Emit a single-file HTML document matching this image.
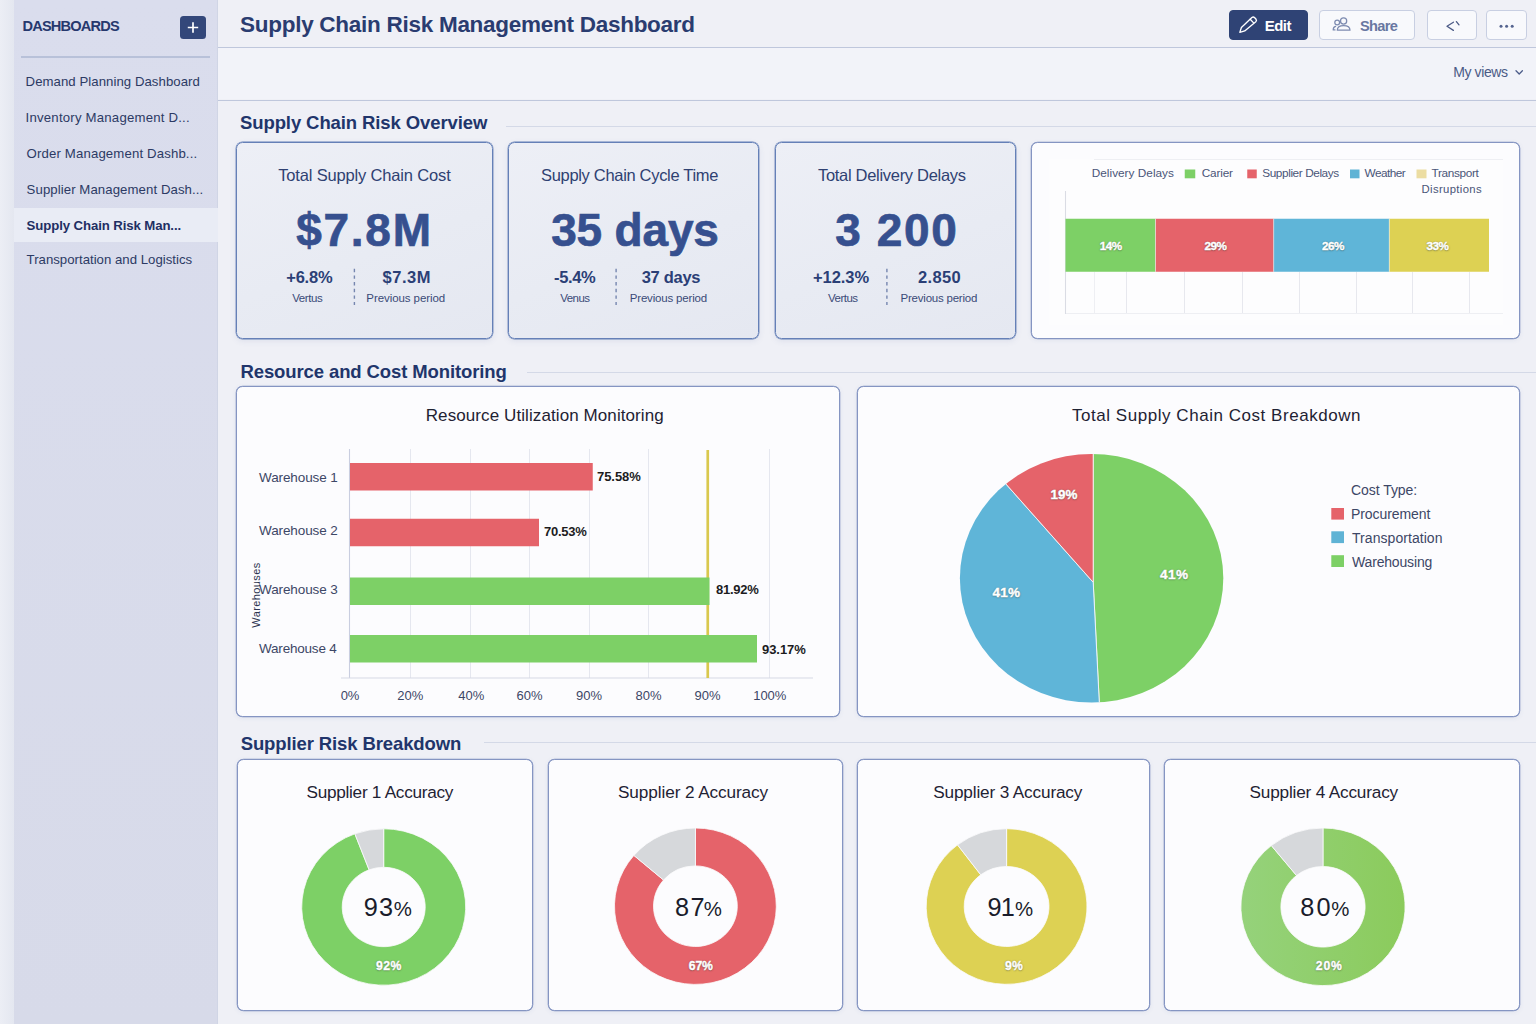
<!DOCTYPE html>
<html lang="en">
<head>
<meta charset="utf-8">
<title>Supply Chain Risk Management Dashboard</title>
<style>
html,body{margin:0;padding:0}
body{width:1536px;height:1024px;position:relative;overflow:hidden;background:#eff0f6;font-family:"Liberation Sans",Arial,sans-serif}
.t{position:absolute;white-space:pre;line-height:1;margin:0;padding:0}
.sh{-webkit-text-stroke:0.4px #fff;text-shadow:0 0 1.5px rgba(45,55,45,.6),0 .5px 1.5px rgba(45,55,45,.35)}
.bg{-webkit-text-stroke:0.7px #36508f}
.b{position:absolute;box-sizing:border-box}
.strip{left:0;top:0;width:14px;height:1024px;background:linear-gradient(90deg,#eceef5,#e4e7f0)}
.side{left:14px;top:0;width:203.5px;height:1024px;background:linear-gradient(180deg,#dadded,#d7dae9);border-right:1px solid #d0d5e5}
.band{left:218px;top:48.2px;width:1318px;height:51.3px;background:#f2f3f9}
.sel{left:14px;top:208px;width:203.5px;height:34px;background:#e9ecf5}
.sep{left:21px;top:56.3px;width:189px;height:1.6px;background:#b8c1d9}
.plus{left:180px;top:16px;width:26px;height:23px;border-radius:3.5px;background:#33477a}
.hl{left:217.5px;width:1318.5px;height:1.2px;background:#bfc7dc}
.sl{height:1px;background:#d4d9e7;right:0}
.btn{top:10.2px;height:30px;border-radius:4px;border:1px solid #c8cfe2;background:#f8f9fc}
.btn.pri{background:#2f4375;border-color:#2f4375}
.kpi{top:142px;height:197px;border:1px solid #6580b7;border-radius:6.5px;background:linear-gradient(160deg,#edeff6 0%,#e8ebf3 55%,#e5e8f1 100%);box-shadow:0 0 0 .4px #6580b7,0 2px 6px rgba(70,90,150,.10)}
.card{border:1px solid #8595c2;border-radius:6.5px;background:#fcfcfe;box-shadow:0 0 0 .3px #8595c2,0 1px 5px rgba(70,90,150,.09)}
svg.ov{position:absolute;left:0;top:0;width:1536px;height:1024px;overflow:visible}
</style>
</head>
<body>

<aside>
<div class="b strip"></div>
<div class="b side"></div>
<div class="b sel"></div>
<div class="b sep"></div>
<div class="b plus"></div>
<nav>
<span class="t" style="left:22.50px;top:19.24px;font-size:14.6px;color:#26386d;font-weight:700;letter-spacing:-0.818px;">DASHBOARDS</span>
<span class="t" style="left:25.60px;top:75.03px;font-size:13.2px;color:#2c3a64;letter-spacing:0.051px;">Demand Planning Dashboard</span>
<span class="t" style="left:25.60px;top:111.13px;font-size:13.2px;color:#2c3a64;letter-spacing:0.208px;">Inventory Management D...</span>
<span class="t" style="left:26.60px;top:147.03px;font-size:13.2px;color:#2c3a64;letter-spacing:0.143px;">Order Management Dashb...</span>
<span class="t" style="left:26.60px;top:183.03px;font-size:13.2px;color:#2c3a64;letter-spacing:0.081px;">Supplier Management Dash...</span>
<span class="t" style="left:26.60px;top:219.13px;font-size:13.2px;color:#1f2f63;font-weight:700;letter-spacing:-0.098px;">Supply Chain Risk Man...</span>
<span class="t" style="left:26.60px;top:252.73px;font-size:13.2px;color:#2c3a64;letter-spacing:0.012px;">Transportation and Logistics</span>
</nav>
</aside>

<header>
<div class="b band"></div>
<div class="b hl" style="top:47px"></div>
<div class="b hl" style="top:99.5px"></div>
<div class="b btn pri" style="left:1229px;width:79.3px"></div>
<div class="b btn" style="left:1319px;width:96.3px"></div>
<div class="b btn" style="left:1427px;width:49.5px"></div>
<div class="b btn" style="left:1486.3px;width:40.8px"></div>
<span class="t" style="left:240.00px;top:13.65px;font-size:22.5px;color:#2a3c70;font-weight:700;letter-spacing:-0.271px;">Supply Chain Risk Management Dashboard</span>
<span class="t" style="left:1264.70px;top:18.30px;font-size:15px;color:#ffffff;font-weight:700;letter-spacing:-0.512px;">Edit</span>
<span class="t" style="left:1360.00px;top:18.64px;font-size:14.6px;color:#6877a1;font-weight:700;letter-spacing:-0.674px;">Share</span>
<span class="t" style="left:1453.30px;top:65.45px;font-size:14px;color:#4a5a86;letter-spacing:-0.408px;">My views</span>
</header>

<main>
<div class="b sl" style="top:125.5px;left:506px"></div>
<div class="b sl" style="top:372px;left:527px"></div>
<div class="b sl" style="top:742px;left:483.5px"></div>

<section>
<span class="t" style="left:240.00px;top:113.64px;font-size:18.5px;color:#21356b;font-weight:700;letter-spacing:-0.098px;">Supply Chain Risk Overview</span>
<div class="b kpi" style="left:236px;width:257px"></div>
<div class="b kpi" style="left:508px;width:251px"></div>
<div class="b kpi" style="left:775px;width:241px"></div>
<div class="b card" style="left:1031px;width:489px;top:142px;height:197px"></div>
</section>

<section>
<span class="t" style="left:240.50px;top:362.64px;font-size:18.5px;color:#21356b;font-weight:700;letter-spacing:-0.111px;">Resource and Cost Monitoring</span>
<div class="b card" style="left:236px;width:604px;top:386px;height:331px"></div>
<div class="b card" style="left:857px;width:663px;top:386px;height:331px"></div>
</section>

<section>
<span class="t" style="left:240.70px;top:734.74px;font-size:18.5px;color:#21356b;font-weight:700;letter-spacing:-0.113px;">Supplier Risk Breakdown</span>
<div class="b card" style="left:237px;width:296px;top:759px;height:252px"></div>
<div class="b card" style="left:548px;width:295px;top:759px;height:252px"></div>
<div class="b card" style="left:857px;width:293px;top:759px;height:252px"></div>
<div class="b card" style="left:1164px;width:356px;top:759px;height:252px"></div>
</section>

<svg class="ov" viewBox="0 0 1536 1024">
<!-- plus sign -->
<path d="M193 22.3V32.7M187.8 27.5H198.2" stroke="#fff" stroke-width="1.7" fill="none"/>
<!-- pencil -->
<g fill="none" stroke="#fff" stroke-width="1.35" stroke-linejoin="round" stroke-linecap="round">
<path d="M1239.8 32.4L1241.4 27.5L1251.9 17.5Q1253.3 16.3 1254.7 17.7L1255.9 19Q1257.1 20.5 1255.8 21.7L1244.7 30.9Z"/>
<path d="M1250.2 19.2L1253.4 22.6"/>
</g>
<!-- people -->
<g fill="none" stroke="#7d8bb0" stroke-width="1.25" stroke-linecap="round" stroke-linejoin="round">
<circle cx="1343.6" cy="20.9" r="3.1"/>
<path d="M1337.3 30.2Q1337.3 25.6 1343.6 25.6Q1350 25.6 1350 30.2Z"/>
<circle cx="1337.2" cy="22.4" r="2.4"/>
<path d="M1335.6 26.4Q1333.2 26.9 1333.2 29.9H1335"/>
</g>
<!-- code icon -->
<g fill="none" stroke="#4b5a86" stroke-width="1.3" stroke-linecap="round" stroke-linejoin="round">
<path d="M1453.4 22.2L1447 26.3L1453.4 30.4"/>
<path d="M1456.4 21.6L1459 24.8"/>
</g>
<!-- dots -->
<g fill="#55648f"><circle cx="1501" cy="26.2" r="1.5"/><circle cx="1506.6" cy="26.2" r="1.5"/><circle cx="1512.2" cy="26.2" r="1.5"/></g>
<!-- chevron -->
<path d="M1516 70.8L1519.2 74L1522.4 70.8" fill="none" stroke="#4d5d8a" stroke-width="1.3" stroke-linecap="round" stroke-linejoin="round"/>

<!-- kpi dividers -->
<path d="M354.4 268.8V305M616.1 268.8V305M886.9 268.8V305" stroke="#7686af" stroke-width="1.4" stroke-dasharray="3.4 3.25" fill="none"/>

<!-- delivery delays chart -->
<g>
<rect x="1049" y="159" width="454" height="166" fill="#fdfdfe"/>
<g stroke="#e7e8ee" stroke-width="1">
<path d="M1094.5 272V314" stroke="#eeeff3"/>
<path d="M1126.5 272V314M1184.5 272V314M1242.5 272V314M1299.5 272V314M1356.5 272V314M1412.5 272V314M1469.5 272V314"/>
</g>
<path d="M1065.5 191V314" stroke="#dadce4" stroke-width="1.1"/>
<path d="M1066 313.5H1503M1094 159.5H1503" stroke="#eeeff3" stroke-width="1"/>
<rect x="1065.5" y="218.75" width="90" height="53" fill="#7dd066"/>
<rect x="1155.5" y="218.75" width="118.2" height="53" fill="#e5636a"/>
<rect x="1273.7" y="218.75" width="115.6" height="53" fill="#5fb5d8"/>
<rect x="1389.3" y="218.75" width="99.7" height="53" fill="#ddd153"/>
<path d="M1155.5 218.75V271.75M1273.7 218.75V271.75M1389.3 218.75V271.75" stroke="#f3f3f3" stroke-width="0.7" opacity=".8"/>
<rect x="1184.75" y="169.5" width="10.5" height="8.8" fill="#7dd066"/>
<rect x="1247.25" y="169.5" width="9.5" height="8.8" fill="#e5636a"/>
<rect x="1350" y="169.5" width="9.5" height="8.8" fill="#5fb3d5"/>
<rect x="1416.5" y="169.5" width="10" height="8.8" fill="#ecdda2"/>
</g>

<!-- resource utilization chart -->
<g>
<path d="M410.5 449V678M470.5 449V678M529.5 449V678M589.5 449V678M648.5 449V678M769.5 449V678" stroke="#e5e7ef" stroke-width="1"/>
<path d="M349.5 449V678" stroke="#c9cee0" stroke-width="1.1"/>
<path d="M341 678H813" stroke="#d6d9e5" stroke-width="1"/>
<path d="M707.75 450V678" stroke="#d9c84e" stroke-width="2.7"/>
<rect x="350" y="463" width="242.75" height="27.5" fill="#e5636a"/>
<rect x="350" y="518.75" width="189" height="27.5" fill="#e5636a"/>
<rect x="350" y="577.5" width="359.5" height="27.5" fill="#7dd066"/>
<rect x="350" y="635" width="407" height="27.5" fill="#7dd066"/>
</g>

<!-- pie chart -->
<g>
<defs><clipPath id="pc"><ellipse cx="1091.6" cy="578.25" rx="131.7" ry="124.3"/></clipPath></defs><g clip-path="url(#pc)"><polygon points="1093.2,582.3 1093.2,182.3 1293.2,235.9 1439.7,382.3 1493.2,582.3 1439.7,782.3 1293.2,928.7 1113.5,981.8" fill="#7dd066" stroke="#f4f6f8" stroke-width="0.9"/><polygon points="1093.2,582.3 1113.5,981.8 911.0,938.4 757.4,799.6 693.8,602.5 737.2,400.1 827.7,283.2" fill="#5fb5d8" stroke="#f4f6f8" stroke-width="0.9"/><polygon points="1093.2,582.3 827.7,283.2 1012.8,190.5 1093.2,182.3" fill="#e5636a" stroke="#f4f6f8" stroke-width="0.9"/></g>
<rect x="1331.3" y="508" width="12.7" height="11.6" fill="#e5636a"/>
<rect x="1331.3" y="531.3" width="12.7" height="11.8" fill="#5fb3d5"/>
<rect x="1331.3" y="555.2" width="12.7" height="11.8" fill="#7dd066"/>
</g>

<!-- supplier donuts -->
<g>
<defs><linearGradient id="g4" x1="0" x2="1" y1="0" y2="0"><stop offset="0" stop-color="#95d27b"/><stop offset="1" stop-color="#8bcb5c"/></linearGradient></defs><path d="M383.70 828.80A82 78.2 0 1 1 354.85 833.80L369.10 869.84A41.5 39.7 0 1 0 383.70 867.30Z" fill="#7dd066" stroke="#fbfbfd" stroke-width="0.8"/><path d="M354.85 833.80A82 78.2 0 0 1 383.70 828.80L383.70 867.30A41.5 39.7 0 0 0 369.10 869.84Z" fill="#d6d8db" stroke="#fbfbfd" stroke-width="0.8"/><path d="M695.40 828.00A80.9 78.2 0 1 1 633.88 855.41L663.54 880.03A41.9 40.3 0 1 0 695.40 865.90Z" fill="#e5636a" stroke="#fbfbfd" stroke-width="0.8"/><path d="M633.88 855.41A80.9 78.2 0 0 1 695.40 828.00L695.40 865.90A41.9 40.3 0 0 0 663.54 880.03Z" fill="#d6d8db" stroke="#fbfbfd" stroke-width="0.8"/><path d="M1006.60 828.70A80.4 77.8 0 1 1 957.54 844.86L980.73 874.81A42.4 40 0 1 0 1006.60 866.50Z" fill="#ddd153" stroke="#fbfbfd" stroke-width="0.8"/><path d="M957.54 844.86A80.4 77.8 0 0 1 1006.60 828.70L1006.60 866.50A42.4 40 0 0 0 980.73 874.81Z" fill="#d6d8db" stroke="#fbfbfd" stroke-width="0.8"/><path d="M1323.00 828.00A82.1 78.8 0 1 1 1271.33 845.56L1296.51 875.48A42.1 40.3 0 1 0 1323.00 866.50Z" fill="url(#g4)" stroke="#fbfbfd" stroke-width="0.8"/><path d="M1271.33 845.56A82.1 78.8 0 0 1 1323.00 828.00L1323.00 866.50A42.1 40.3 0 0 0 1296.51 875.48Z" fill="#d6d8db" stroke="#fbfbfd" stroke-width="0.8"/>
</g>
</svg>

<span class="t" style="left:278.20px;top:167.13px;font-size:16.5px;color:#2f4172;letter-spacing:-0.160px;">Total Supply Chain Cost</span>
<span class="t bg" style="left:296.20px;top:206.76px;font-size:46px;color:#36508f;font-weight:700;letter-spacing:1.743px;">$7.8M</span>
<span class="t" style="left:286.20px;top:269.03px;font-size:16.5px;color:#2b3f76;font-weight:700;letter-spacing:-0.193px;">+6.8%</span>
<span class="t" style="left:292.20px;top:292.87px;font-size:11.5px;color:#3a4a78;letter-spacing:-0.390px;">Vertus</span>
<span class="t" style="left:382.50px;top:269.03px;font-size:16.5px;color:#2b3f76;font-weight:700;letter-spacing:0.522px;">$7.3M</span>
<span class="t" style="left:366.30px;top:292.87px;font-size:11.5px;color:#3a4a78;letter-spacing:-0.072px;">Previous period</span>
<span class="t" style="left:541.00px;top:167.13px;font-size:16.5px;color:#2f4172;letter-spacing:-0.316px;">Supply Chain Cycle Time</span>
<span class="t bg" style="left:551.15px;top:206.76px;font-size:46px;color:#36508f;font-weight:700;letter-spacing:-0.168px;">35 days</span>
<span class="t" style="left:554.00px;top:269.03px;font-size:16.5px;color:#2b3f76;font-weight:700;letter-spacing:-0.358px;">-5.4%</span>
<span class="t" style="left:560.25px;top:292.87px;font-size:11.5px;color:#3a4a78;letter-spacing:-0.556px;">Venus</span>
<span class="t" style="left:641.75px;top:269.03px;font-size:16.5px;color:#2b3f76;font-weight:700;letter-spacing:-0.312px;">37 days</span>
<span class="t" style="left:629.75px;top:292.87px;font-size:11.5px;color:#3a4a78;letter-spacing:-0.179px;">Previous period</span>
<span class="t" style="left:818.00px;top:167.13px;font-size:16.5px;color:#2f4172;letter-spacing:-0.303px;">Total Delivery Delays</span>
<span class="t bg" style="left:835.15px;top:206.76px;font-size:46px;color:#36508f;font-weight:700;letter-spacing:1.668px;">3 200</span>
<span class="t" style="left:813.00px;top:269.03px;font-size:16.5px;color:#2b3f76;font-weight:700;letter-spacing:-0.050px;">+12.3%</span>
<span class="t" style="left:828.00px;top:292.87px;font-size:11.5px;color:#3a4a78;letter-spacing:-0.520px;">Vertus</span>
<span class="t" style="left:918.00px;top:269.03px;font-size:16.5px;color:#2b3f76;font-weight:700;letter-spacing:0.347px;">2.850</span>
<span class="t" style="left:900.50px;top:292.87px;font-size:11.5px;color:#3a4a78;letter-spacing:-0.215px;">Previous period</span>
<span class="t" style="left:1091.75px;top:168.41px;font-size:11.8px;color:#4a5578;letter-spacing:0.015px;">Delivery Delays</span>
<span class="t" style="left:1201.75px;top:168.41px;font-size:11.8px;color:#4a5578;letter-spacing:-0.188px;">Carier</span>
<span class="t" style="left:1262.25px;top:168.41px;font-size:11.8px;color:#4a5578;letter-spacing:-0.409px;">Supplier Delays</span>
<span class="t" style="left:1364.50px;top:168.41px;font-size:11.8px;color:#4a5578;letter-spacing:-0.532px;">Weather</span>
<span class="t" style="left:1431.50px;top:168.41px;font-size:11.8px;color:#4a5578;letter-spacing:-0.346px;">Transport</span>
<span class="t" style="left:1421.50px;top:183.93px;font-size:11.3px;color:#4a5578;letter-spacing:0.364px;">Disruptions</span>
<span class="t sh" style="left:1099.75px;top:239.60px;font-size:11.7px;color:#ffffff;font-weight:700;letter-spacing:-0.500px;">14%</span>
<span class="t sh" style="left:1204.50px;top:239.60px;font-size:11.7px;color:#ffffff;font-weight:700;letter-spacing:-0.500px;">29%</span>
<span class="t sh" style="left:1322.00px;top:239.60px;font-size:11.7px;color:#ffffff;font-weight:700;letter-spacing:-0.500px;">26%</span>
<span class="t sh" style="left:1426.50px;top:239.60px;font-size:11.7px;color:#ffffff;font-weight:700;letter-spacing:-0.500px;">33%</span>
<span class="t" style="left:425.75px;top:406.86px;font-size:17px;color:#1f2233;letter-spacing:0.090px;">Resource Utilization Monitoring</span>
<span class="t" style="left:259.00px;top:471.27px;font-size:13.5px;color:#3d4766;letter-spacing:-0.104px;">Warehouse 1</span>
<span class="t" style="left:259.00px;top:523.77px;font-size:13.5px;color:#3d4766;letter-spacing:-0.104px;">Warehouse 2</span>
<span class="t" style="left:259.00px;top:582.57px;font-size:13.5px;color:#3d4766;letter-spacing:-0.104px;">Warehouse 3</span>
<span class="t" style="left:259.00px;top:641.57px;font-size:13.5px;color:#3d4766;letter-spacing:-0.204px;">Warehouse 4</span>
<span class="t" style="left:597.00px;top:470.20px;font-size:13px;color:#1c1c1e;font-weight:700;letter-spacing:-0.056px;">75.58%</span>
<span class="t" style="left:544.00px;top:525.00px;font-size:13px;color:#1c1c1e;font-weight:700;letter-spacing:-0.256px;">70.53%</span>
<span class="t" style="left:716.00px;top:583.00px;font-size:13px;color:#1c1c1e;font-weight:700;letter-spacing:-0.256px;">81.92%</span>
<span class="t" style="left:762.00px;top:642.50px;font-size:13px;color:#1c1c1e;font-weight:700;letter-spacing:-0.056px;">93.17%</span>
<span class="t" style="left:340.64px;top:688.70px;font-size:13px;color:#3d4766;">0%</span>
<span class="t" style="left:397.27px;top:688.70px;font-size:13px;color:#3d4766;">20%</span>
<span class="t" style="left:458.27px;top:688.70px;font-size:13px;color:#3d4766;">40%</span>
<span class="t" style="left:516.52px;top:688.70px;font-size:13px;color:#3d4766;">60%</span>
<span class="t" style="left:576.02px;top:688.70px;font-size:13px;color:#3d4766;">90%</span>
<span class="t" style="left:635.52px;top:688.70px;font-size:13px;color:#3d4766;">80%</span>
<span class="t" style="left:694.52px;top:688.70px;font-size:13px;color:#3d4766;">90%</span>
<span class="t" style="left:753.16px;top:688.70px;font-size:13px;color:#3d4766;">100%</span>
<span class="t" style="left:1072.00px;top:406.61px;font-size:17px;color:#1f2233;letter-spacing:0.539px;">Total Supply Chain Cost Breakdown</span>
<span class="t sh" style="left:1050.50px;top:488.41px;font-size:13.4px;color:#ffffff;font-weight:700;letter-spacing:0.053px;">19%</span>
<span class="t sh" style="left:1160.00px;top:568.24px;font-size:13.6px;color:#ffffff;font-weight:700;letter-spacing:0.440px;">41%</span>
<span class="t sh" style="left:992.50px;top:585.82px;font-size:13.5px;color:#ffffff;font-weight:700;letter-spacing:0.242px;">41%</span>
<span class="t" style="left:1351.00px;top:482.85px;font-size:14px;color:#3d4766;letter-spacing:-0.047px;">Cost Type:</span>
<span class="t" style="left:1351.00px;top:506.95px;font-size:14px;color:#3d4766;letter-spacing:-0.085px;">Procurement</span>
<span class="t" style="left:1352.00px;top:530.55px;font-size:14px;color:#3d4766;letter-spacing:0.057px;">Transportation</span>
<span class="t" style="left:1352.00px;top:554.65px;font-size:14px;color:#3d4766;letter-spacing:-0.168px;">Warehousing</span>
<span class="t" style="left:255.8px;top:594.8px;font-size:11px;color:#2c3450;transform:translate(-50%,-50%) rotate(-90deg);letter-spacing:0.4px">Warehouses</span>
<span class="t" style="left:306.50px;top:783.94px;font-size:17.2px;color:#1f2233;letter-spacing:-0.278px;">Supplier 1 Accuracy</span>
<span class="t" style="left:618.00px;top:783.94px;font-size:17.2px;color:#1f2233;letter-spacing:-0.098px;">Supplier 2 Accuracy</span>
<span class="t" style="left:933.25px;top:783.94px;font-size:17.2px;color:#1f2233;letter-spacing:-0.153px;">Supplier 3 Accuracy</span>
<span class="t" style="left:1249.50px;top:783.94px;font-size:17.2px;color:#1f2233;letter-spacing:-0.181px;">Supplier 4 Accuracy</span>
<span class="t" style="left:363.70px;top:894.68px;font-size:25.3px;color:#1a1c2b;letter-spacing:1.131px;">93</span>
<span class="t" style="left:393.75px;top:898.83px;font-size:20.4px;color:#1a1c2b;">%</span>
<span class="t" style="left:674.90px;top:894.68px;font-size:25.3px;color:#1a1c2b;letter-spacing:1.431px;">87</span>
<span class="t" style="left:703.75px;top:898.83px;font-size:20.4px;color:#1a1c2b;">%</span>
<span class="t" style="left:987.60px;top:894.68px;font-size:25.3px;color:#1a1c2b;letter-spacing:-0.869px;">91</span>
<span class="t" style="left:1015.10px;top:898.83px;font-size:20.4px;color:#1a1c2b;">%</span>
<span class="t" style="left:1300.30px;top:894.68px;font-size:25.3px;color:#1a1c2b;letter-spacing:2.031px;">80</span>
<span class="t" style="left:1331.30px;top:898.83px;font-size:20.4px;color:#1a1c2b;">%</span>
<span class="t sh" style="left:376.00px;top:960.17px;font-size:12.2px;color:#ffffff;font-weight:700;letter-spacing:0.472px;">92%</span>
<span class="t sh" style="left:688.75px;top:959.87px;font-size:12.2px;color:#ffffff;font-weight:700;letter-spacing:-0.153px;">67%</span>
<span class="t sh" style="left:1005.00px;top:959.87px;font-size:12.2px;color:#ffffff;font-weight:700;letter-spacing:0.222px;">9%</span>
<span class="t sh" style="left:1315.75px;top:959.87px;font-size:12.2px;color:#ffffff;font-weight:700;letter-spacing:0.847px;">20%</span>
</main>

</body>
</html>
